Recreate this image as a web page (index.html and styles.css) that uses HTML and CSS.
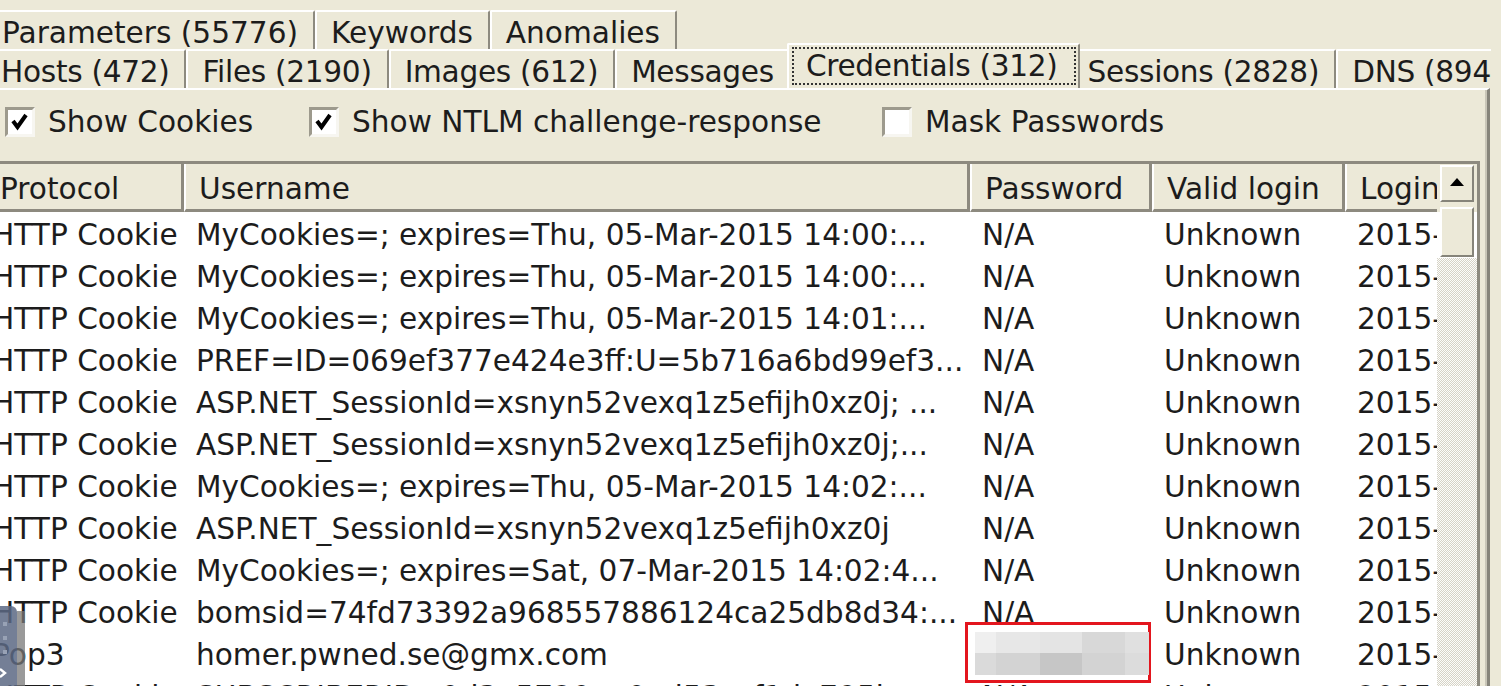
FILE: index.html
```html
<!DOCTYPE html>
<html>
<head>
<meta charset="utf-8">
<link rel="stylesheet" href="styles.css">
</head>
<body>
<div class="tabctl">
  <div class="tabrow row1">
    <div class="tab">Parameters (55776)</div>
    <div class="tab">Keywords</div>
    <div class="tab">Anomalies</div>
  </div>
  <div class="tabrow row2">
    <div class="tab">Hosts (472)</div>
    <div class="tab">Files (2190)</div>
    <div class="tab">Images (612)</div>
    <div class="tab">Messages</div>
    <div class="tab selected"><span class="focus">Credentials (312)</span></div>
    <div class="tab">Sessions (2828)</div>
    <div class="tab">DNS (894)</div>
  </div>
  <div class="panel">
    <div class="options">
      <label class="opt opt1"><span class="box"><svg viewBox="0 0 24 24" width="24" height="24"><polyline points="5,11 9.5,17 18,5" fill="none" stroke="#000" stroke-width="4"/></svg></span>Show Cookies</label>
      <label class="opt opt2"><span class="box"><svg viewBox="0 0 24 24" width="24" height="24"><polyline points="5,11 9.5,17 18,5" fill="none" stroke="#000" stroke-width="4"/></svg></span>Show NTLM challenge-response</label>
      <label class="opt opt3"><span class="box"></span>Mask Passwords</label>
    </div>
    <div class="table">
      <div class="gridarea">
        <div class="cols head">
          <div class="hc">Protocol</div>
          <div class="hc">Username</div>
          <div class="hc">Password</div>
          <div class="hc">Valid login</div>
          <div class="hc">Login timestamp</div>
        </div>
        <div class="rows">
          <div class="cols row"><div class="c first">HTTP Cookie</div><div class="c">MyCookies=; expires=Thu, 05-Mar-2015 14:00:...</div><div class="c">N/A</div><div class="c">Unknown</div><div class="c">2015-03-04 14:00:05 UTC</div></div>
          <div class="cols row"><div class="c first">HTTP Cookie</div><div class="c">MyCookies=; expires=Thu, 05-Mar-2015 14:00:...</div><div class="c">N/A</div><div class="c">Unknown</div><div class="c">2015-03-04 14:00:41 UTC</div></div>
          <div class="cols row"><div class="c first">HTTP Cookie</div><div class="c">MyCookies=; expires=Thu, 05-Mar-2015 14:01:...</div><div class="c">N/A</div><div class="c">Unknown</div><div class="c">2015-03-04 14:01:12 UTC</div></div>
          <div class="cols row"><div class="c first">HTTP Cookie</div><div class="c">PREF=ID=069ef377e424e3ff:U=5b716a6bd99ef3...</div><div class="c">N/A</div><div class="c">Unknown</div><div class="c">2015-03-04 14:01:30 UTC</div></div>
          <div class="cols row"><div class="c first">HTTP Cookie</div><div class="c">ASP.NET_SessionId=xsnyn52vexq1z5efijh0xz0j; ...</div><div class="c">N/A</div><div class="c">Unknown</div><div class="c">2015-03-04 14:01:44 UTC</div></div>
          <div class="cols row"><div class="c first">HTTP Cookie</div><div class="c">ASP.NET_SessionId=xsnyn52vexq1z5efijh0xz0j;...</div><div class="c">N/A</div><div class="c">Unknown</div><div class="c">2015-03-04 14:01:52 UTC</div></div>
          <div class="cols row"><div class="c first">HTTP Cookie</div><div class="c">MyCookies=; expires=Thu, 05-Mar-2015 14:02:...</div><div class="c">N/A</div><div class="c">Unknown</div><div class="c">2015-03-04 14:02:03 UTC</div></div>
          <div class="cols row"><div class="c first">HTTP Cookie</div><div class="c">ASP.NET_SessionId=xsnyn52vexq1z5efijh0xz0j</div><div class="c">N/A</div><div class="c">Unknown</div><div class="c">2015-03-04 14:02:10 UTC</div></div>
          <div class="cols row"><div class="c first">HTTP Cookie</div><div class="c">MyCookies=; expires=Sat, 07-Mar-2015 14:02:4...</div><div class="c">N/A</div><div class="c">Unknown</div><div class="c">2015-03-04 14:02:47 UTC</div></div>
          <div class="cols row"><div class="c first">HTTP Cookie</div><div class="c">bomsid=74fd73392a968557886124ca25db8d34:...</div><div class="c">N/A</div><div class="c">Unknown</div><div class="c">2015-03-04 14:02:55 UTC</div></div>
          <div class="cols row"><div class="c first">Pop3</div><div class="c">homer.pwned.se@gmx.com</div><div class="c"></div><div class="c">Unknown</div><div class="c">2015-03-04 14:03:02 UTC</div></div>
          <div class="cols row"><div class="c first">HTTP Cookie</div><div class="c">SUBSCRIBERID=0d3e5720ea0ad53ccf1de795b</div><div class="c">N/A</div><div class="c">Unknown</div><div class="c">2015-03-04 14:03:15 UTC</div></div>
        </div>
      </div>
      <div class="vscroll">
        <div class="sbbtn"><svg viewBox="0 0 14 8" width="14" height="8"><polygon points="0,8 7,0 14,8" fill="#000"/></svg></div>
        <div class="sbthumb"></div>
      </div>
    </div>
  </div>
</div>

<div class="redact">
  <i class="p1"></i><i class="p2"></i><i class="p3"></i><i class="p4"></i><i class="p5"></i>
  <i class="p6"></i><i class="p7"></i><i class="p8"></i><i class="p9"></i><i class="p10"></i>
</div>

<div class="handle">
  <i class="dot d1"></i><i class="dot d2"></i><i class="dot d3"></i>
  <svg class="chev" viewBox="0 0 8 10" width="8" height="10"><polyline points="0,1 5,5 0,9" fill="none" stroke="#fff" stroke-width="2.4"/></svg>
</div>
<div class="handle-strip"></div>
</body>
</html>
```

FILE: styles.css
```css
html, body {
  margin: 0;
  padding: 0;
}
body {
  width: 1501px;
  height: 686px;
  overflow: hidden;
  position: relative;
  background: #ece9d8;
  font-family: "DejaVu Sans", "Noto Sans", sans-serif;
  font-size: 29.6px;
  color: #1c1c1c;
}

.tabctl {
  width: 1491px;
  overflow: hidden;
}

.tabrow {
  display: flex;
  align-items: flex-end;
  height: 39px;
  margin-left: -14px;
  white-space: nowrap;
}
.row1 {
  margin-top: 10px;
}
.row2 {
  margin-left: -15px;
  letter-spacing: -0.3px;
}

.tab {
  box-sizing: border-box;
  height: 39px;
  flex: none;
  display: flex;
  align-items: center;
  padding: 4px 15px 0 14px;
  border-top: 2px solid #fff;
  border-left: 2px solid #fff;
  border-right: 2px solid #8d8a7f;
  border-top-left-radius: 2px;
  border-top-right-radius: 2px;
  background: #ece9d8;
}

.tab.selected {
  height: 45px;
  margin-left: -4px;
  margin-right: -8px;
  padding: 2px 2px 4px 3px;
  align-items: flex-start;
  position: relative;
  z-index: 1;
}
.focus {
  box-sizing: border-box;
  height: 38px;
  display: flex;
  align-items: center;
  padding: 0 16px 1px 12px;
  border: 2px dotted #333;
}

.panel {
  box-sizing: border-box;
  width: 1490px;
  height: 600px;
  border-top: 2px solid #fff;
  border-right: 3px solid #86847a;
  box-shadow: inset -2px 0 0 #c9c6b8;
}

.options {
  display: flex;
  align-items: center;
  height: 30px;
  padding: 17px 0 0 5px;
  margin-bottom: 24px;
}
.opt {
  display: flex;
  align-items: center;
  flex: none;
  height: 30px;
  white-space: nowrap;
}
.opt1 { width: 304px; }
.opt2 { width: 573px; }
.box {
  box-sizing: border-box;
  width: 30px;
  height: 30px;
  margin-right: 13px;
  background: #fff;
  border: 3px solid;
  border-color: #9d9a8d #f7f6f1 #f7f6f1 #9d9a8d;
  display: flex;
  align-items: center;
  justify-content: center;
}

.table {
  box-sizing: border-box;
  width: 1480px;
  height: 530px;
  display: flex;
  border-top: 3px solid #8d8a7f;
  border-right: 3px solid #8d8a7f;
}
.gridarea {
  width: 1437px;
  flex: none;
  overflow: hidden;
  background: #fff;
}
.cols {
  display: grid;
  grid-template-columns: 199px 786px 182px 193px 300px;
  margin-left: -15px;
  width: max-content;
}
.hc {
  box-sizing: border-box;
  height: 48px;
  display: flex;
  align-items: center;
  padding: 5px 0 0 13px;
  background: #ece9d8;
  border-left: 2px solid #fff;
  border-right: 3px solid #8d8a7f;
  border-bottom: 3px solid #8d8a7f;
  white-space: nowrap;
  overflow: hidden;
}
.rows {
  padding-top: 2px;
}
.row {
  height: 42px;
}
.c {
  padding-left: 12px;
  line-height: 42px;
  white-space: nowrap;
  overflow: hidden;
}
.c.first {
  padding-left: 7px;
}

.vscroll {
  width: 40px;
  flex: none;
  display: flex;
  flex-direction: column;
  align-items: center;
  padding-top: 1px;
  background-image:
    linear-gradient(#ece9d8 0 48px, #fff 48px 94px, transparent 94px),
    repeating-conic-gradient(#fdfdfb 0 25%, #d6d3c7 0 50%);
  background-size: auto, 2px 2px;
}
.sbbtn, .sbthumb {
  box-sizing: border-box;
  width: 34px;
  background: #ece9d8;
  border: 2px solid;
  border-color: #fff #86847a #86847a #fff;
}
.sbbtn {
  height: 37px;
  margin-bottom: 5px;
  display: flex;
  align-items: center;
  justify-content: center;
  padding-bottom: 3px;
}
.sbthumb {
  height: 50px;
}

.redact {
  position: absolute;
  left: 965px;
  top: 622px;
  box-sizing: border-box;
  width: 186px;
  height: 61px;
  border: 3px solid #e3161e;
  padding: 7px 0 0 7px;
  display: grid;
  grid-template-columns: 21px 44px 42px 43px 24px;
  grid-template-rows: 21px 22px;
  background: #fff;
}
.redact i { display: block; }
.p1 { background: #efefef; }
.p2 { background: #e7e7e7; }
.p3 { background: #e4e4e4; }
.p4 { background: #d8d8d8; }
.p5 { background: #e0e0e0; }
.p6 { background: #dadada; }
.p7 { background: #d3d3d3; }
.p8 { background: #c6c6c6; }
.p9 { background: #d3d3d3; }
.p10 { background: #dcdcdc; }

.handle {
  position: absolute;
  left: 0;
  top: 606px;
  width: 17px;
  height: 80px;
  background: rgba(92, 105, 132, 0.85);
  border-top-right-radius: 6px;
}
.handle .dot {
  position: absolute;
  left: 3px;
  width: 4px;
  height: 4px;
  background: #98a2b5;
}
.d1 { top: 16px; }
.d2 { top: 30px; }
.d3 { top: 44px; }
.chev {
  position: absolute;
  left: 0;
  top: 62px;
}
.handle-strip {
  position: absolute;
  left: 17px;
  top: 611px;
  width: 8px;
  height: 75px;
  background: rgba(120, 120, 120, 0.75);
}
```
